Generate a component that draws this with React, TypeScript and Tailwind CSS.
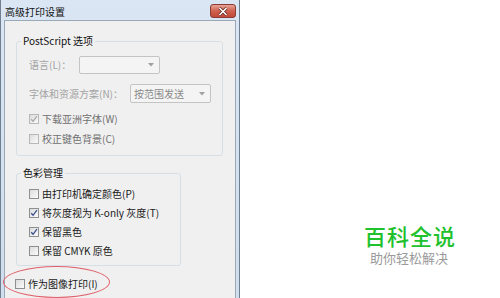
import React from "react";

function Check({ checked = false, disabled = false }: { checked?: boolean; disabled?: boolean }) {
  return (
    <div
      className={`w-[10px] h-[10px] shrink-0 border ${disabled ? "border-[#b8b8b8]" : "border-[#8e8f8f]"} bg-gradient-to-br from-[#dcdcdc] to-[#fbfbfb] flex items-center justify-center`}
    >
      {checked && (
        <svg width="8" height="8" viewBox="0 0 8 8">
          <path
            d="M1.2 4.2 L3.1 6.3 L6.9 1.2"
            fill="none"
            stroke={disabled ? "#a8a8a8" : "#3b4f8c"}
            strokeWidth="1.3"
          />
        </svg>
      )}
    </div>
  );
}

function Row({ checked, disabled, label }: { checked?: boolean; disabled?: boolean; label: string }) {
  return (
    <div className="h-[16px] flex items-center gap-[3px]">
      <Check checked={checked} disabled={disabled} />
      <span className={`text-[10px] leading-none ${disabled ? "text-[#707070]" : "text-[#1a1a1a]"}`}>{label}</span>
    </div>
  );
}

function Dropdown({ w, text }: { w: string; text?: string }) {
  return (
    <div className={`${w} h-full border border-[#c4c4c4] rounded-[2px] bg-[#f4f4f4] flex items-center justify-between pl-[3px] pr-[5px]`}>
      <span className="text-[10px] leading-none text-[#8a8a8a]">{text ?? ""}</span>
      <svg width="6" height="4" viewBox="0 0 6 4">
        <path d="M0 0 L6 0 L3 3.5 Z" fill="#a0a0a0" />
      </svg>
    </div>
  );
}

export default function App() {
  return (
    <div className="relative w-[500px] h-[298px] bg-white overflow-hidden flex font-['Noto_Sans_CJK_SC',sans-serif]">
      {/* dialog */}
      <div className="w-[240px] h-[298px] flex flex-col bg-gradient-to-b from-[#dae6f3] to-[#cfdded] border-l border-r border-[#6f7f90]">
        <div className="h-[20px] shrink-0 flex items-start justify-between pl-[4px] pr-[3px]">
          <span className="text-[10px] leading-none text-[#111] mt-[7px]">高级打印设置</span>
          <div className="mt-[4px] w-[26px] h-[14px] rounded-[3px] border border-[#8a3b33] bg-gradient-to-b from-[#e6a396] via-[#d0604f] to-[#c0493a] flex items-center justify-center">
            <svg width="10" height="9" viewBox="0 0 10 9">
              <path d="M1.5 1 L8.5 8 M8.5 1 L1.5 8" stroke="#5a1f1a" strokeWidth="3" />
              <path d="M1.5 1 L8.5 8 M8.5 1 L1.5 8" stroke="#ffffff" strokeWidth="1.6" />
            </svg>
          </div>
        </div>
        <div className="flex-1 mx-[3px] bg-[#f0f0f0] border-t border-l border-r border-[#9aa8b8] overflow-hidden flex flex-col pl-[11px]">
          {/* PostScript group */}
          <div className="relative mt-[20px] w-[207px] h-[115px] shrink-0 border border-[#d5dfe5] rounded-[3px] flex flex-col pl-[12px] pt-[14px]">
            <span className="absolute left-[4px] -top-[7px] px-[2px] bg-[#f0f0f0] text-[10px] leading-[12px] text-[#111]">PostScript 选项</span>
            <div className="h-[18px] flex items-center">
              <span className="w-[50px] text-[10px] leading-none text-[#a3a3a3]">语言(L)：</span>
              <Dropdown w="w-[81px]" />
            </div>
            <div className="h-[19px] mt-[10px] flex items-center">
              <span className="w-[101px] text-[10px] leading-none text-[#a3a3a3]">字体和资源方案(N)：</span>
              <Dropdown w="w-[81px]" text="按范围发送" />
            </div>
            <div className="mt-[8px]">
              <Row checked disabled label="下载亚洲字体(W)" />
            </div>
            <div className="mt-[4px]">
              <Row disabled label="校正键色背景(C)" />
            </div>
          </div>
          {/* Color group */}
          <div className="relative mt-[17px] w-[165px] h-[93px] shrink-0 border border-[#d5dfe5] rounded-[3px] flex flex-col gap-[3px] pl-[12px] pt-[12px]">
            <span className="absolute left-[4px] -top-[7px] px-[2px] bg-[#f0f0f0] text-[10px] leading-[12px] text-[#111]">色彩管理</span>
            <Row label="由打印机确定颜色(P)" />
            <Row checked label="将灰度视为 K-only 灰度(T)" />
            <Row checked label="保留黑色" />
            <Row label="保留 CMYK 原色" />
          </div>
          <div className="mt-[10px] flex flex-col gap-[3px] -ml-[1px]">
            <Row label="作为图像打印(I)" />
            <Row label="" />
          </div>
        </div>
      </div>
      {/* watermark */}
      <div className="flex-1 flex flex-col pl-[124px] pt-[224px]">
        <span className="text-[22px] leading-[22px] font-medium text-[#1fc22d] tracking-[1px]">百科全说</span>
        <span className="mt-[5px] pl-[6px] text-[13px] leading-[13px] text-[#9a9a9a]">助你轻松解决</span>
      </div>
      {/* red annotation ellipse */}
      <div className="absolute left-[3px] top-[266px] w-[107px] h-[32px] rounded-[50%] border border-[#e0606a]" />
    </div>
  );
}
